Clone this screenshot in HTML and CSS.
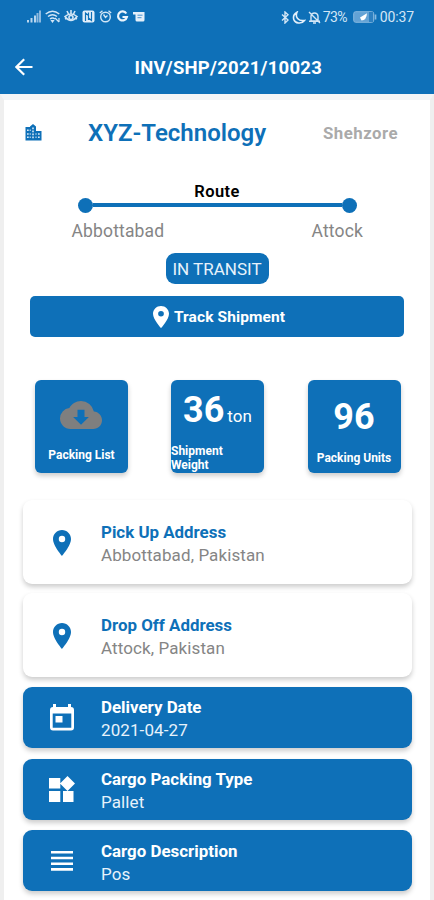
FILE: index.html
```html
<!DOCTYPE html>
<html lang="en">
<head>
<meta charset="utf-8">
<meta name="viewport" content="width=device-width">
<title>Shipment</title>
<link rel="stylesheet" href="styles.css">
</head>
<body>
<header class="top">
  <div class="status">
    <div class="status-left">
      <svg width="14" height="13" viewBox="0 0 14 13"><path d="M0 10h2v2.500H0zM3.500 8h2v4.500h-2zM7 5.500h2v7H7z" fill="#b9d6ee"/><path d="M9.500 3h2v9.500h-2zM12 .5h2v12h-2z" fill="#8db9df"/></svg>
      <svg width="15" height="13" viewBox="0 0 15 13" fill="none" stroke="#d3e6f6" stroke-width="1.500"><path d="M.7 4Q7.500-1.500 14.300 4M3 6.500q4.500-3.500 9 0M5 9q2.500-2 5 0"/><path d="M6.500 10.500h2L7.500 12zM10 8l4 4m0-4v4" stroke-width="1.200"/></svg>
      <svg width="14" height="13" viewBox="0 0 14 13" fill="none" stroke="#d3e6f6" stroke-width="1.600"><path d="M1 6.500q6-5 12 0-6 8-12 0zM7 0v3.500M3 1l1.500 3M11 1 9.500 4M1 9l2-1M13 9l-2-1"/><circle cx="7" cy="7.500" r="2"/></svg>
      <svg width="13" height="13" viewBox="0 0 13 13"><rect x=".5" y=".5" width="12" height="12" rx="2" fill="#e3effa"/><path d="M3.500 11V3l3 2.500V10M6.500 2.500V8l3 2.500V2" fill="none" stroke="#0e70b8" stroke-width="1.200"/></svg>
      <svg width="13" height="13" viewBox="0 0 13 13" fill="none" stroke="#d3e6f6" stroke-width="1.400"><circle cx="6.500" cy="7" r="4.800"/><path d="M.8 3 3.500.8M12.200 3 9.500.8M4.500 4.500l2 3 2-2"/></svg>
      <svg width="13" height="13" viewBox="0 0 13 13" fill="none" stroke="#eaf4fc" stroke-width="2.200"><path d="M10.300 3.500A4.500 4.500 0 1 0 10.900 7H6.500"/></svg>
      <svg width="13" height="13" viewBox="0 0 13 13"><path d="M0 2h11.500v8q0 1.500-1.500 1.500H4Q2.500 11.500 2.500 10V4.500H0z" fill="#e3effa"/><path d="M4.500 5.200h5M4.500 7.700h4" stroke="#4a93cd"/></svg>
    </div>
    <div class="status-right">
      <svg width="9" height="13" viewBox="0 0 9 13" fill="none" stroke="#d3e6f6" stroke-width="1.400"><path d="m1 3.500 6 5.500-3 3V1l3 2.800L1 9.500"/></svg>
      <svg width="14" height="13" viewBox="0 0 14 13" fill="none" stroke="#e3effa" stroke-width="1.600"><path d="M5 1.200C3 6 6 10.500 12.500 9.500 9.500 13.500 3 12.500 1.800 8.500 1 5.500 2.500 2.500 5 1.200z"/></svg>
      <svg class="bell" width="13" height="13" viewBox="0 0 13 13" fill="none" stroke="#d3e6f6" stroke-width="1.400"><path d="M3 10V5q.5-3 3.500-3T10 5v5zM1 10.200h11M5 12h3M1 1l11 11"/></svg>
      <span class="battery-text">73%</span>
      <svg width="24" height="12" viewBox="0 0 24 12"><rect x=".7" y=".7" width="20" height="10.600" rx="2" fill="#62a2d5" stroke="#86b8df"/><path d="M16 1h4v10h-4z" fill="#2d80c1"/><path d="M14 2.300 7 6.500l1.500 3q5 0 5.500-7.200z" fill="#fff"/><path d="M22.500 3.500v5" stroke="#86b8df" stroke-width="1.700"/></svg>
      <span class="clock">00:37</span>
    </div>
  </div>
  <div class="titlebar">
    <svg class="back" width="18" height="18" viewBox="0 0 18 18" fill="none" stroke="#fff" stroke-width="2.200"><path d="M17.500 9H2M9.200 1.200 1.400 9l7.800 7.800"/></svg>
    <h1>INV/SHP/2021/10023</h1>
  </div>
</header>
<main class="sheet">
  <section class="company">
    <svg width="17" height="17" viewBox="0 0 17 17"><path d="M.5 3H5V2.500L8 0l3 2.500V7h5.500v9.500H.5z" fill="#0e70b8"/><path d="M2 5.500h1.700v1.600H2zM2 9.200h1.700v1.600H2zM2 12.500h1.700v1.600H2zM4.700 5.500h1v1.600h-1zM4.700 9.200h1v1.600h-1zM4.700 12.500h1v1.600h-1zM7.200 3.500h1.600v1.700H7.200zM7.200 6.500h1.600v1.700H7.200zM7.200 9.500h1.600v1.700H7.200zM7.200 12.500h1.600v1.700H7.200zM10.500 9.200h1v1.600h-1zM10.500 12.500h1v1.600h-1zM13 9.200h1.700v1.600H13zM13 12.500h1.700v1.600H13z" fill="#d8e8f5"/></svg>
    <h2>XYZ-Technology</h2>
    <span class="vehicle">Shehzore</span>
  </section>
  <section class="route">
    <div class="route-name">Route</div>
    <div class="track"><i class="dot"></i><i class="line"></i><i class="dot"></i></div>
    <div class="cities"><span class="from">Abbottabad</span><span class="to">Attock</span></div>
  </section>
  <div class="state"><span>IN TRANSIT</span></div>
  <button class="track-btn">
    <svg width="16" height="22" viewBox="0 0 14 20" preserveAspectRatio="none"><path d="M7 0C3.130 0 0 3.130 0 7c0 5.250 7 13 7 13s7-7.750 7-13c0-3.870-3.130-7-7-7zm0 9.500A2.500 2.500 0 1 1 7 4.500a2.500 2.500 0 0 1 0 5z" fill="#fff"/></svg>
    <span>Track Shipment</span>
  </button>
  <section class="tiles">
    <div class="tile list">
      <svg width="42" height="28" viewBox="0 0 24 16"><path d="M19.350 6.040A7.490 7.490 0 0 0 12 0C9.110 0 6.600 1.640 5.350 4.040A5.994 5.994 0 0 0 0 10c0 3.310 2.690 6 6 6h13c2.760 0 5-2.240 5-5 0-2.640-2.050-4.780-4.650-4.960zM16.500 9.200 12 13.500 7.500 9.200H10V5h4v4.200z" fill="#7f7f7f"/></svg>
      <b>Packing List</b>
    </div>
    <div class="tile weight">
      <div class="amount"><strong>36</strong><span>ton</span></div>
      <b>Shipment<br>Weight</b>
    </div>
    <div class="tile units"><strong>96</strong><b>Packing Units</b></div>
  </section>
  <section class="details">
    <article class="row address">
      <svg class="pin" width="18" height="26" viewBox="0 0 14 20" preserveAspectRatio="none"><path d="M7 0C3.130 0 0 3.130 0 7c0 5.250 7 13 7 13s7-7.750 7-13c0-3.870-3.130-7-7-7zm0 9.500A2.500 2.500 0 1 1 7 4.500a2.500 2.500 0 0 1 0 5z" fill="#0e70b8"/></svg>
      <div><h3>Pick Up Address</h3><p>Abbottabad, Pakistan</p></div>
    </article>
    <article class="row address">
      <svg class="pin" width="18" height="26" viewBox="0 0 14 20" preserveAspectRatio="none"><path d="M7 0C3.130 0 0 3.130 0 7c0 5.250 7 13 7 13s7-7.750 7-13c0-3.870-3.130-7-7-7zm0 9.500A2.500 2.500 0 1 1 7 4.500a2.500 2.500 0 0 1 0 5z" fill="#0e70b8"/></svg>
      <div><h3>Drop Off Address</h3><p>Attock, Pakistan</p></div>
    </article>
    <article class="row info">
      <svg width="24" height="27" viewBox="0 0 24 27"><path fill-rule="evenodd" d="M3 3V0h3v3h12V0h3v3q3 0 3 3v17.500q0 3-3 3H3q-3 0-3-3V6q0-3 3-3zm-.3 6.500v14.300h18.600V9.500z" fill="#fff"/><path d="M5.500 12h7v6.500h-7z" fill="#fff"/></svg>
      <div><h3>Delivery Date</h3><p>2021-04-27</p></div>
    </article>
    <article class="row info">
      <svg width="26" height="26" viewBox="0 0 26 26"><path d="M0 2h11.300v10.500H0zM0 15h11.300v11H0zM14 15h10.500v11H14zM18.500 0 26 7.500 18.500 15 11 7.500z" fill="#fff"/></svg>
      <div><h3>Cargo Packing Type</h3><p>Pallet</p></div>
    </article>
    <article class="row info">
      <svg width="22" height="20" viewBox="0 0 22 20"><path d="M0 0h22v2.600H0zM0 5.700h22v2.600H0zM0 11.400h22V14H0zM0 17.100h22v2.600H0z" fill="#fff"/></svg>
      <div><h3>Cargo Description</h3><p>Pos</p></div>
    </article>
  </section>
</main>
</body>
</html>
```

FILE: styles.css
```css
:root { --blue: #0e70b8; }
* { box-sizing: border-box; }
body { margin: 0; height: 900px; overflow: hidden; background: #fff; font-family: Roboto, sans-serif; }
h1, h2, h3, p { margin: 0; white-space: nowrap; }
svg { display: block; flex: none; }

.top { height: 94px; background: var(--blue); color: #fff; }
.status { height: 34px; display: flex; justify-content: space-between; padding: 10px 20px 0 27px; color: #d3e6f6; }
.status-left { display: flex; gap: 4px; }
.status-right { display: flex; gap: 2px; height: 14px; align-items: center; }
.battery-text, .clock { font-size: 14px; line-height: 14px; }
.battery-text { width: 27px; margin-right: 1px; letter-spacing: -.5px; }
.clock { margin-left: 1px; letter-spacing: -.1px; }
.titlebar { height: 60px; display: flex; align-items: center; padding: 5px 0 0 15px; }
.titlebar h1 { margin-left: 101.500px; font-size: 18.500px; line-height: 24px; font-weight: 700; letter-spacing: .25px; margin-top: 2px; }

.sheet { height: 806px; border: 4px solid #efefef; border-top: 6px solid #f3f5f7; border-bottom: 0; }
.company { height: 64px; display: flex; align-items: center; padding-left: 21px; }
.company h2 { width: 178px; margin-left: 46px; margin-top: 2px; color: var(--blue); font-size: 24px; line-height: 30px; font-weight: 600; letter-spacing: 0; }
.vehicle { margin-left: 57px; margin-top: 2px; color: #aaa; font-size: 16.800px; font-weight: 700; letter-spacing: .5px; }
.route { height: 89px; padding-top: 18px; }
.route-name { height: 15px; line-height: 20px; text-align: center; font-size: 16.500px; font-weight: 600; letter-spacing: .4px; color: #000; }
.track { display: flex; align-items: center; margin: 0 73px 0 74px; height: 16px; }
.dot { width: 15px; height: 15px; border-radius: 50%; background: var(--blue); }
.line { flex: 1; height: 4px; background: var(--blue); }
.cities { display: flex; justify-content: space-between; padding: 7px 67px 0 67.500px; color: #858585; font-size: 17.500px; line-height: 22px; letter-spacing: .15px; }
.state { display: flex; justify-content: center; height: 43px; }
.state span { width: 103px; height: 31px; border-radius: 9px; background: var(--blue); color: #e7f2fb; font-size: 17px; line-height: 32px; text-align: center; }
.track-btn { display: flex; align-items: center; justify-content: center; gap: 5px; width: 374px; height: 41px; margin: 0 0 0 26px; padding: 0 0 0 4px; border: 0; border-radius: 5px; background: var(--blue); color: #fff; font: 700 15.500px/20px Roboto, sans-serif; letter-spacing: .1px; }
.tiles { display: grid; grid-template-columns: 93px 93px 93px; column-gap: 43.500px; padding: 43px 0 0 31px; color: #fff; }
.tile { height: 92.500px; border-radius: 6px; background: var(--blue); box-shadow: 0 3px 5px #0003; text-align: center; }
.tile b { display: block; font-size: 12px; line-height: 14px; font-weight: 700; white-space: nowrap; }
.tile strong { display: block; font-size: 36px; line-height: 42px; font-weight: 700; }
.list { padding-top: 21px; }
.list svg { margin: 0 auto 19px 25px; }
.weight { padding-top: 9px; margin-left: -.5px; width: 93px; }
.amount { display: flex; align-items: baseline; gap: 3px; padding-left: 12px; }
.amount span { font-size: 17px; }
.weight b { text-align: left; margin-top: 13px; }
.units { padding-top: 16px; margin-left: -.5px; width: 93px; }
.units b { margin-top: 13px; }
.details { margin: 27.500px 0 0 19px; width: 388.500px; }
.row { display: grid; grid-template-columns: 78px 1fr; align-items: center; border-radius: 9px; box-shadow: 0 3px 5px #0003; }
.row svg { justify-self: center; }
.row div { padding-top: 3px; }
.row h3 { font-size: 16.900px; line-height: 23px; font-weight: 700; }
.row p { font-size: 17px; line-height: 23px; letter-spacing: .1px; }
.address { height: 84px; margin-bottom: 9px; background: #fff; }
.address .pin { margin-top: 2px; }
.address div { padding-top: 4px; }
.address h3 { color: var(--blue); }
.address p { color: #858585; }
.info { height: 61px; margin-bottom: 10.800px; background: var(--blue); color: #fff; }
.address + .info { margin-top: 9.800px; }
.info div { padding-top: 4px; }
.info p { color: #e7f2fb; }
```
